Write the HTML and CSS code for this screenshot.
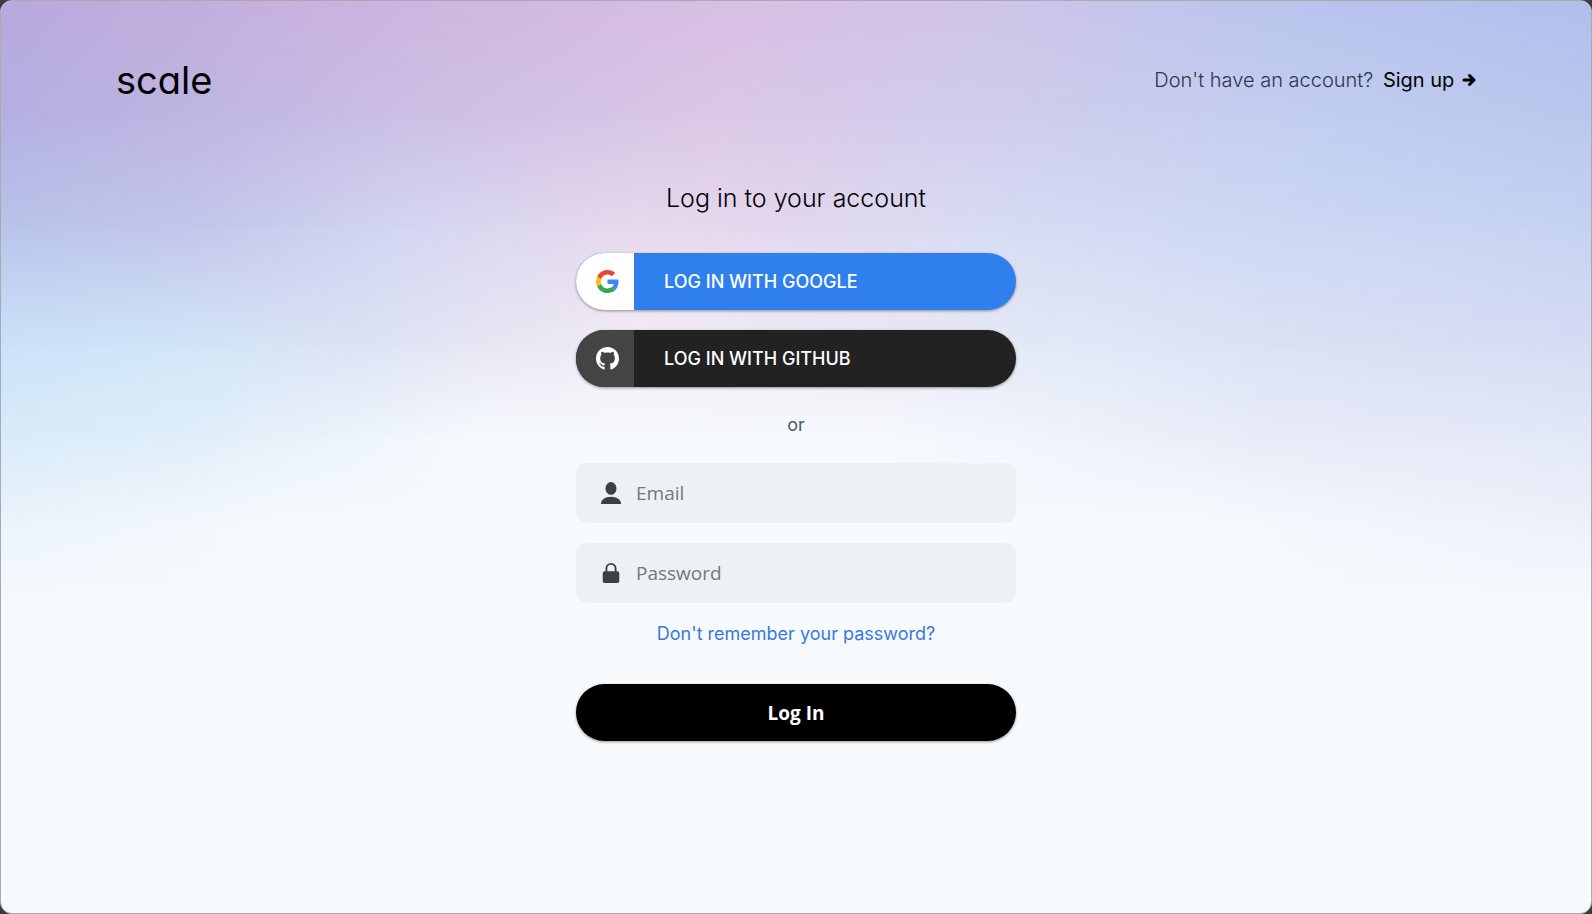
FILE: index.html
```html
<!DOCTYPE html>
<html lang="en">
<head>
    <meta charset="UTF-8">
    <meta name="viewport" content="width=device-width, initial-scale=1">
    <title>Log in | Scale</title>
    <link rel="stylesheet" href="styles.css">
</head>

<body>
    <div class="page">
        <!-- Background glow, each band fades into the next one -->
        <div class="glow glow-6"></div>
        <div class="glow glow-5"></div>
        <div class="glow glow-4"></div>
        <div class="glow glow-3"></div>
        <div class="glow glow-2"></div>
        <div class="glow glow-1"></div>

        <header class="header">
            <a class="logo" href="#">scale</a>
            <p class="signup">
                Don't have an account?
                <a class="signup-link" href="#">Sign up
                    <svg class="arrow" viewBox="0 0 14 14" aria-hidden="true">
                        <path d="M2 7h10M7.500 2.500L12 7l-4.500 4.500" fill="none" stroke="currentColor" stroke-width="3" stroke-linecap="round" stroke-linejoin="round"/>
                    </svg>
                </a>
            </p>
        </header>

        <main class="login">
            <h1>Log in to your account</h1>

            <!-- Social logins -->
            <button type="button" class="social google">
                <span class="social-icon">
                    <svg viewBox="0 0 48 48" aria-hidden="true">
                        <path fill="#EA4335" d="M24 9.5c3.54 0 6.71 1.22 9.21 3.6l6.85-6.85C35.9 2.38 30.47 0 24 0 14.62 0 6.51 5.38 2.56 13.22l7.98 6.19C12.43 13.72 17.74 9.5 24 9.5z"/>
                        <path fill="#4285F4" d="M46.98 24.55c0-1.57-.15-3.09-.38-4.55H24v9.02h12.94c-.58 2.96-2.26 5.48-4.78 7.18l7.73 6c4.51-4.18 7.09-10.36 7.09-17.65z"/>
                        <path fill="#FBBC05" d="M10.53 28.59c-.48-1.45-.76-2.99-.76-4.59s.27-3.14.76-4.59l-7.98-6.19C.92 16.46 0 20.12 0 24c0 3.88.92 7.54 2.56 10.78l7.97-6.19z"/>
                        <path fill="#34A853" d="M24 48c6.48 0 11.93-2.13 15.89-5.81l-7.73-6c-2.15 1.45-4.92 2.3-8.16 2.3-6.26 0-11.57-4.22-13.47-9.91l-7.98 6.19C6.51 42.62 14.62 48 24 48z"/>
                    </svg>
                </span>
                <span class="social-text">LOG IN WITH GOOGLE</span>
            </button>
            <button type="button" class="social github">
                <span class="social-icon">
                    <svg viewBox="0 0 16 16" aria-hidden="true">
                        <path fill="#fff" d="M8 0C3.58 0 0 3.58 0 8c0 3.54 2.29 6.53 5.47 7.59.4.07.55-.17.55-.38 0-.19-.01-.82-.01-1.49-2.01.37-2.53-.49-2.69-.94-.09-.23-.48-.94-.82-1.13-.28-.15-.68-.52-.01-.53.63-.01 1.08.58 1.23.82.72 1.21 1.87.87 2.33.66.07-.52.28-.87.51-1.07-1.78-.2-3.64-.89-3.64-3.95 0-.87.31-1.59.82-2.15-.08-.2-.36-1.02.08-2.12 0 0 .67-.21 2.2.82.64-.18 1.32-.27 2-.27s1.36.09 2 .27c1.53-1.04 2.2-.82 2.2-.82.44 1.1.16 1.92.08 2.12.51.56.82 1.27.82 2.15 0 3.07-1.87 3.75-3.65 3.95.29.25.54.73.54 1.48 0 1.07-.01 1.93-.01 2.2 0 .21.15.46.55.38A8.01 8.01 0 0 0 16 8c0-4.42-3.58-8-8-8z"/>
                    </svg>
                </span>
                <span class="social-text">LOG IN WITH GITHUB</span>
            </button>

            <p class="or">or</p>

            <form class="form">
                <label class="field">
                    <svg viewBox="0 0 24 24" aria-hidden="true">
                        <ellipse cx="12" cy="7" rx="6" ry="7"/>
                        <path d="M1 24c0-5 5-8 11-8s11 3 11 8z"/>
                    </svg>
                    <input type="email" placeholder="Email" aria-label="Email">
                </label>
                <label class="field">
                    <svg viewBox="0 0 24 24" aria-hidden="true">
                        <path d="M7 11V7a5 5 0 0 1 10 0v4" fill="none" stroke="#3d4042" stroke-width="2"/>
                        <rect x="3" y="10" width="18" height="13" rx="2"/>
                    </svg>
                    <input type="password" placeholder="Password" aria-label="Password">
                </label>
                <a class="forgot" href="#">Don't remember your password?</a>
                <button type="submit" class="submit">Log In</button>
            </form>
        </main>
    </div>
</body>
</html>
```
FILE: styles.css
```css
* {
    box-sizing: border-box;
}
html {
    background: #3c3c40;
}
body {
    margin: 0;
    font-family: Inter, "Liberation Sans", sans-serif;
    color: #000;
}
a {
    text-decoration: none;
}
.page {
    position: relative;
    z-index: 0;
    min-height: 100vh;
    padding: 59px 115px 60px;
    border: 1px solid #a9a9b4;
    border-radius: 12px;
    overflow: hidden;
    background: #f6fafd;
}
.glow {
    position: absolute;
    inset: 0;
    z-index: -1;
}
.glow-1 {
    background: linear-gradient(to right, #b8a8dc, #cdb4de 25%, #d8bfe4 47%, #cfc4e8 62%, #b9c4ec 80%, #b0beec);
    mask-image: linear-gradient(#000, transparent 13%);
}
.glow-2 {
    background: linear-gradient(to right, #b4b0e2, #beb6e2 12%, #cbbfe5 25%, #dcc8e6 45%, #d2cdec 60%, #c4cff0 80%, #b9c8ee);
    mask-image: linear-gradient(#000 13%, transparent 25%);
}
.glow-3 {
    background: linear-gradient(to right, #b8c4ea, #c3c6ea 12%, #d3d6f2 25%, #e8d9ec 40%, #e2d8ee 50%, #d8dcf3 62%, #ccd8f4 80%, #c6d2f1);
    mask-image: linear-gradient(#000 25%, transparent 38%);
}
.glow-4 {
    background: linear-gradient(to right, #cbe3f9, #d0e6f8 10%, #dce3f4 22%, #ebe8f4 33%, #f2ecf5 40%, #ece8f4 55%, #e0e9f7 68%, #dbe2f4 80%, #d6dcf4);
    mask-image: linear-gradient(#000 38%, transparent 48%);
}
.glow-5 {
    background: linear-gradient(to right, #d8ebf8, #e0eef9 12%, #edf4fc 22%, #f6fafd 30%, #f6fafd 55%, #f1f4fc 65%, #e8ebf8 80%, #e3e8f7);
    mask-image: linear-gradient(#000 48%, transparent 57%);
}
.glow-6 {
    background: linear-gradient(to right, #eaf3fc, #f1f6fc 10%, #f6fafd 18%, #f6fafd 75%, #f1f4fc 88%, #ecf0fa);
    mask-image: linear-gradient(#000 57%, transparent 66%);
}
.header {
    display: flex;
    justify-content: space-between;
    align-items: center;
}
.logo {
    font-size: 38px;
    line-height: 40px;
    color: #000;
    font-feature-settings: "cv11";
}
.signup {
    margin: 0;
    font-size: 20px;
    font-weight: 300;
    line-height: 40px;
    color: #2f3550;
}
.signup-link {
    margin-left: 4px;
    font-weight: 400;
    color: #000;
}
.arrow {
    width: 14px;
    height: 14px;
    margin-left: 2px;
}
.login {
    max-width: 440px;
    margin: 78px auto 0;
}
h1 {
    margin: 0 0 35px;
    font-size: 25px;
    font-weight: 300;
    line-height: 40px;
    text-align: center;
}
.social {
    display: flex;
    width: 100%;
    height: 57px;
    margin-bottom: 20px;
    padding: 0;
    border: none;
    border-radius: 29px;
    overflow: hidden;
    color: #fff;
    font-family: inherit;
    font-size: 18px;
    font-weight: 500;
    box-shadow: 0 1px 3px rgba(0, 0, 0, 0.4);
    cursor: pointer;
}
.social-icon {
    display: flex;
    align-items: center;
    width: 58px;
    height: 100%;
    padding-left: 20px;
}
.social-icon svg {
    width: 23px;
    height: 23px;
}
.social-text {
    align-self: center;
    padding-left: 30px;
}
.google {
    background: #2f80ed;
}
.google .social-icon {
    background: #fff;
}
.github {
    background: #222;
}
.github .social-icon {
    background: #444;
}
.or {
    margin: 0;
    padding: 6px 0 26px;
    font-size: 18px;
    line-height: 24px;
    text-align: center;
    color: #4f5b66;
}
.form {
    display: flex;
    flex-direction: column;
}
.field {
    display: flex;
    align-items: center;
    height: 60px;
    margin-bottom: 20px;
    padding: 0 24px;
    border-radius: 10px;
    background: #ecf1f5;
}
.field svg {
    width: 22px;
    height: 22px;
    fill: #3d4042;
}
.field input {
    flex: 1;
    min-width: 0;
    padding: 0 0 0 14px;
    border: none;
    outline: none;
    background: transparent;
    font-family: "Open Sans", sans-serif;
    font-size: 19px;
}
.field input::placeholder {
    color: #777;
}
.forgot {
    align-self: center;
    margin-bottom: 40px;
    font-size: 18px;
    line-height: 21px;
    color: #3b78e0;
}
.submit {
    height: 57px;
    border: none;
    border-radius: 29px;
    background: #000;
    color: #fff;
    font-family: "Open Sans", sans-serif;
    font-size: 19px;
    font-weight: 700;
    box-shadow: 0 1px 3px rgba(0, 0, 0, 0.4);
    cursor: pointer;
}
```
